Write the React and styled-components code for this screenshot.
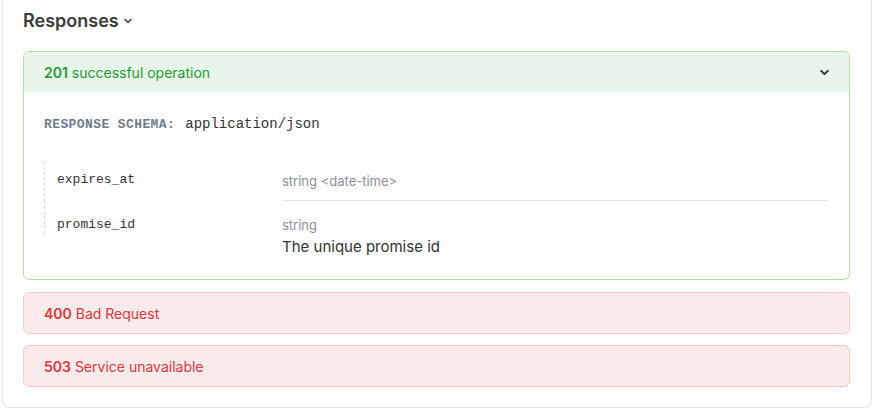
import React from 'react';
import styled, { createGlobalStyle } from 'styled-components';

const GlobalStyle = createGlobalStyle`
	body {
		margin: 0;
		background: #ffffff;
		font-family: Inter, "Noto Sans", sans-serif;
		color: #333333;
	}
`;

const Chevron = ({ size = 10, color = '#333', weight = 1.8 }) => (
	<svg width={size} height={size} viewBox='0 0 10 10' fill='none'>
		<path d='M2 3.5 L5 6.5 L8 3.5' stroke={color} strokeWidth={weight} strokeLinecap='round' strokeLinejoin='round' />
	</svg>
);

const props = [
	{ name: 'expires_at', type: 'string <date-time>' },
	{ name: 'promise_id', type: 'string', description: 'The unique promise id' },
];

const errors = [
	{ code: '400', label: 'Bad Request' },
	{ code: '503', label: 'Service unavailable' },
];

const App = () => {
	return (
		<>
			<GlobalStyle />
			<Card>
				<Heading>
					Responses
					<Chevron size={10} color='#444' weight={1.6} />
				</Heading>
				<Responses>
					<SuccessBox>
						<SuccessHeader>
							<span>
								<Code>201</Code> successful operation
							</span>
							<Chevron size={11} color='#333' />
						</SuccessHeader>
						<SchemaBody>
							<SchemaLine>
								<SchemaLabel>Response Schema:</SchemaLabel>
								<SchemaType>application/json</SchemaType>
							</SchemaLine>
							<PropTable>
								{props.map((p, i) => {
									const first = i === 0;
									const last = i === props.length - 1;
									return (
										<PropRow key={p.name}>
											<PropName $first={first} $last={last}>{p.name}</PropName>
											<PropDetails $first={first} $last={last}>
												<PropType>{p.type}</PropType>
												{p.description && <PropDescription>{p.description}</PropDescription>}
											</PropDetails>
										</PropRow>
									);
								})}
							</PropTable>
						</SchemaBody>
					</SuccessBox>
					{errors.map((e) => (
						<ErrorBox key={e.code}>
							<Code>{e.code}</Code>&nbsp;{e.label}
						</ErrorBox>
					))}
				</Responses>
			</Card>
		</>
	);
};

var Card = styled.div`
	margin-left: 2px;
	width: 870px;
	box-sizing: border-box;
	border: 1px solid #e3e5ea;
	border-top: none;
	border-radius: 0 0 8px 8px;
	padding: 9px 21px 20px 20px;
`;

var Heading = styled.h2`
	margin: 0 0 18px;
	display: flex;
	align-items: center;
	gap: 4px;
	font-size: 18px;
	line-height: 24px;
	font-weight: 600;
	color: #3b3b3b;
`;

var Responses = styled.div`
	display: flex;
	flex-direction: column;
	gap: 11px;
`;

var SuccessBox = styled.div`
	border: 1px solid #b1df9c;
	border-radius: 6px;
	overflow: hidden;
	margin-bottom: 1px;
`;

var SuccessHeader = styled.div`
	height: 40px;
	display: flex;
	align-items: center;
	justify-content: space-between;
	padding: 0 19px 0 20px;
	background: #e8f5eb;
	color: #1f9d2e;
	font-size: 14px;
`;

var Code = styled.strong`
	font-weight: 600;
`;

var SchemaBody = styled.div`
	padding: 24px 21px 22px 20px;
`;

var SchemaLine = styled.div`
	display: flex;
	align-items: baseline;
	gap: 10px;
	margin-bottom: 30px;
`;

var SchemaLabel = styled.span`
	font-family: "Liberation Mono", monospace;
	font-weight: 700;
	font-size: 13px;
	letter-spacing: 0.4px;
	text-transform: uppercase;
	color: #6e7b8b;
`;

var SchemaType = styled.span`
	font-family: "Liberation Mono", monospace;
	font-size: 14px;
	color: #333;
`;

var PropTable = styled.div`
	display: flex;
	flex-direction: column;
`;

var PropRow = styled.div`
	display: grid;
	grid-template-columns: 238px 1fr;
	align-items: start;
`;

var PropName = styled.div`
	padding: ${(p) => (p.$first ? '9px' : '15px')} 0 ${(p) => (p.$last ? '0' : '12px')} 12px;
	font-family: "Liberation Mono", monospace;
	font-size: 13px;
	line-height: 18px;
	color: #333;
	border-left: 1px dashed #d6d9de;
	white-space: nowrap;
`;

var PropDetails = styled.div`
	padding: ${(p) => (p.$first ? '10px' : '15px')} 0 ${(p) => (p.$last ? '0' : '10px')};
	border-bottom: ${(p) => (p.$last ? 'none' : '1px solid #e3e5ea')};
`;

var PropType = styled.div`
	font-size: 13px;
	line-height: 18px;
	color: #8a919b;
`;

var PropDescription = styled.div`
	margin-top: 3px;
	font-size: 15px;
	line-height: 20px;
	color: #333;
`;

var ErrorBox = styled.div`
	height: 40px;
	display: flex;
	align-items: center;
	padding: 0 20px;
	border: 1px solid #f8c9c8;
	border-radius: 6px;
	background: #fbebea;
	color: #e5343a;
	font-size: 14px;
`;

export default App;
